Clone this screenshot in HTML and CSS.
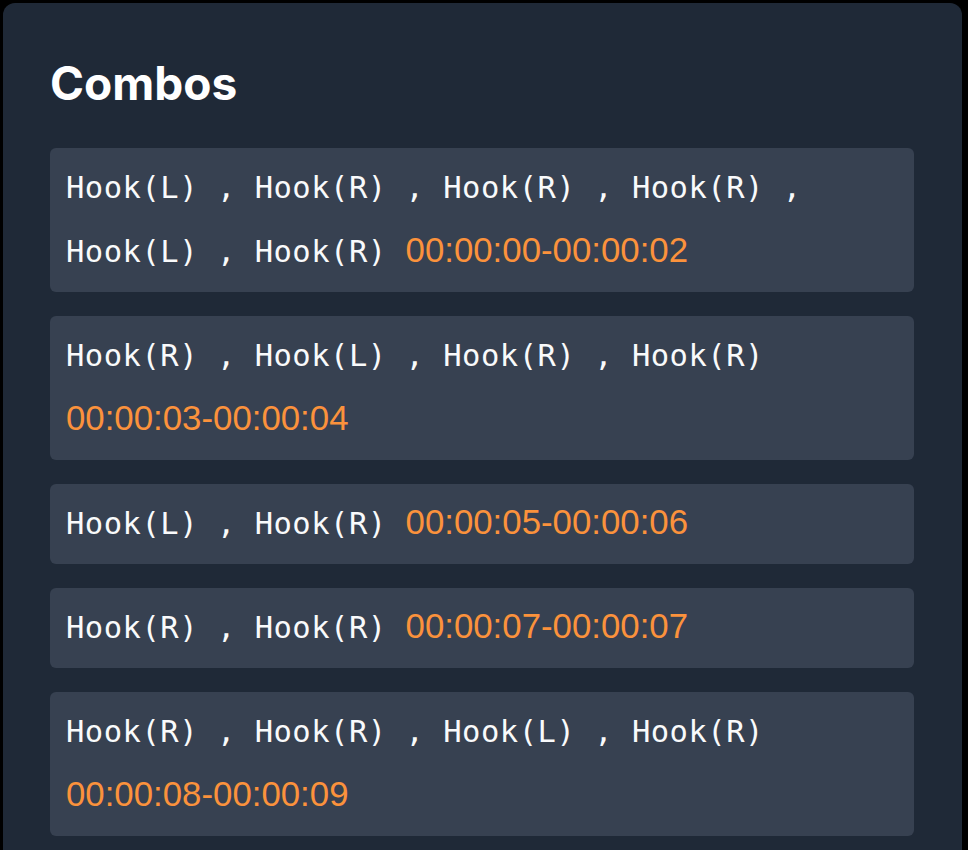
FILE: index.html
```html
<!DOCTYPE html>
<html>
<head>
<meta charset="utf-8">
<link rel="stylesheet" href="styles.css">
</head>
<body>
<section class="card">
  <h2 class="title">Combos</h2>
  <div class="list">
    <div class="combo"><span class="moves">Hook(L) , Hook(R) , Hook(R) , Hook(R) , Hook(L) , Hook(R) </span><span class="time">00:00:00-00:00:02</span></div>
    <div class="combo"><span class="moves">Hook(R) , Hook(L) , Hook(R) , Hook(R) </span><span class="time">00:00:03-00:00:04</span></div>
    <div class="combo"><span class="moves">Hook(L) , Hook(R) </span><span class="time">00:00:05-00:00:06</span></div>
    <div class="combo"><span class="moves">Hook(R) , Hook(R) </span><span class="time">00:00:07-00:00:07</span></div>
    <div class="combo"><span class="moves">Hook(R) , Hook(R) , Hook(L) , Hook(R) </span><span class="time">00:00:08-00:00:09</span></div>
  </div>
</section>
</body>
</html>
```

FILE: styles.css
```css
html, body {
  margin: 0;
  padding: 0;
  background: #000;
}
body {
  padding: 3px 6px 0 3px;
  height: 850px;
  overflow: hidden;
  box-sizing: border-box;
}
.card {
  background: #1f2937;
  border-radius: 12px;
  padding: 52px 48px 48px 47px;
  min-height: 900px;
  box-sizing: border-box;
}
.title {
  margin: 0 0 37px 0;
  font-family: Inter, "Liberation Sans", sans-serif;
  font-weight: 700;
  font-size: 46px;
  line-height: 56px;
  color: #ffffff;
  letter-spacing: 0;
}
.list {
  display: flex;
  flex-direction: column;
  gap: 24px;
}
.combo {
  background: #374151;
  border-radius: 6px;
  padding: 8px 16px;
  font-family: "DejaVu Sans Mono", monospace;
  font-size: 30.5px;
  line-height: 64px;
  color: #f9fafb;
}
.moves {
  letter-spacing: 0.5px;
  white-space: pre-wrap;
}
.time {
  font-family: "Liberation Sans", sans-serif;
  font-size: 34.8px;
  line-height: 1;
  color: #fb923c;
  white-space: nowrap;
}
```
